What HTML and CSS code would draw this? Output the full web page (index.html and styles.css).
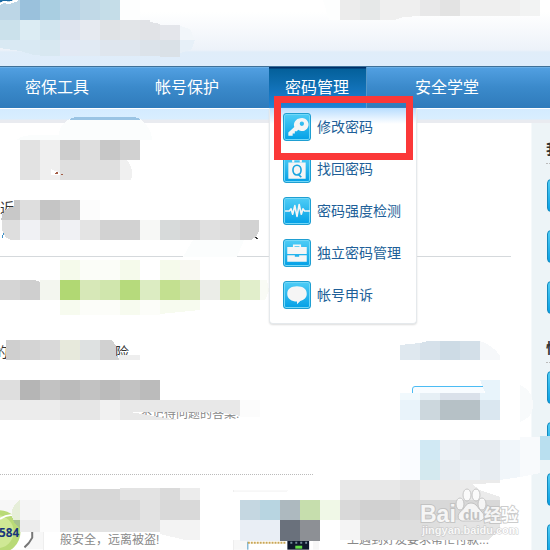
FILE: index.html
```html
<!DOCTYPE html>
<html lang="zh-CN">
<head>
<meta charset="utf-8">
<title>密码管理</title>
<link rel="stylesheet" href="styles.css">
</head>
<body>
<div class="page">
<header class="banner"></header>
<nav class="nav">
  <a class="tab" href="#tools">密保工具</a>
  <a class="tab" href="#account">帐号保护</a>
  <div class="tab-group">
    <a class="tab active" href="#password">密码管理</a>
    <div class="menu">
      <a class="item" href="#change"><svg class="icon" viewBox="2 2 24 24"><path fill="#f5f5f5" fill-rule="evenodd" d="M17 6a6 6 0 0 0-5.500 8L6 19v3h4v-2h2v-2h2l1-1.500A6 6 0 1 0 17 6zm1.500 3a2 2 0 1 1 0 4 2 2 0 0 1 0-4z"/></svg>修改密码</a>
      <a class="item" href="#recover"><svg class="icon" viewBox="2 2 24 24"><path fill="none" stroke="#f5f5f5" stroke-width="2" d="M10.500 8V5h7v3"/><path fill="#f5f5f5" d="M6 8h16v15H6z"/><path fill="none" stroke="#19a5df" stroke-width="1.500" d="M14 10.500c5 0 5 9 0 9s-5-9 0-9zM14.500 18.500l3.500 3"/></svg>找回密码</a>
      <a class="item" href="#strength"><svg class="icon" viewBox="2 2 24 24"><path fill="none" stroke="#f5f5f5" stroke-width="1.500" stroke-linejoin="round" d="M3 14h4l1.500-2L10 17l2-8 2 10 2-11 2 9 1.500-5 1.500 2H26"/></svg>密码强度检测</a>
      <a class="item" href="#standalone"><svg class="icon" viewBox="2 2 24 24"><path fill="none" stroke="#f5f5f5" stroke-width="1.500" d="M11 9V7h6v2"/><path fill="#f5f5f5" d="M5 8.500h18V15H5zM5 16h7v1.500h4V16h7v6H5z"/></svg>独立密码管理</a>
      <a class="item" href="#appeal"><svg class="icon" viewBox="2 2 24 24"><path fill="#f5f5f5" d="M14 6c5.500 0 9 2.500 9 7 0 3.500-2.500 5.500-6 6.500L14 22.500V20c-5 0-9-2.500-9-7s3.500-7 9-7z"/></svg>帐号申诉</a>
    </div>
  </div>
  <a class="tab" href="#school">安全学堂</a>
</nav>
<div class="band"></div>
<div class="body">
  <main class="content">
    <section class="recent"><h2 class="title">近</h2></section>
    <section class="risk">
      <h2 class="title risk-title"><span>的</span><span>险</span></h2>
      <div class="answer-row"><p class="note">不记得问题的答案.</p><button class="action" type="button" aria-label="设置"></button></div>
    </section>
    <section class="cards">
      <article class="card">
        <svg class="ball" viewBox="0 0 44 60"><path fill="#f7f7f7" d="M0 0h44v60H0z"/><path fill="#fff" d="M16 20q17 5 17 25 0 8-8 15H10z"/><path fill="none" stroke="#777" stroke-width="2" d="M25 24q9 12 8 24-3 6-8 10"/><circle cx="-1" cy="42" r="22" fill="#b9da77"/><circle cx="-3" cy="42" r="17" fill="#cfe895"/><path fill="none" stroke="#fff" stroke-width="2" d="M0 29q8-6 16-3"/><text class="ball-label" x="-1" y="47">584</text></svg>
        <p class="note">般安全，远离被盗!</p>
      </article>
      <article class="card second">
        <svg class="phone" viewBox="0 0 86 60"><path fill="#f7f7f7" d="M0 0h86v60H0z"/><path fill="#fff" d="M14 51h66v9H14z"/><path stroke="#4e9bc5" d="M14 52v8"/><path stroke="#c9a655" stroke-width="2" stroke-dasharray="2 1" d="M14 53h38"/><path fill="#10182c" d="M54 49h22v11H54z"/><path stroke="#758b9a" stroke-width="2" stroke-dasharray="2 3" d="M57 53h17"/><path fill="#62dc45" d="M62 56h7v3h-7z"/></svg>
        <p class="note">上遇到好友要求帮忙付款...</p>
      </article>
    </section>
  </main>
  <aside class="side">
    <h3 class="side-title">我</h3>
    <div class="side-list"><i class="chip"></i><i class="chip"></i><i class="chip"></i></div>
    <h3 class="side-title">快</h3>
    <div class="side-list"><i class="chip"></i><i class="chip"></i><i class="chip"></i><i class="chip"></i></div>
  </aside>
</div>
<svg class="mosaic" viewBox="0 0 550 550" shape-rendering="crispEdges" aria-hidden="true">
  <path fill="#bcd6e6" d="M0 0h20v20H0z"/><path fill="#9ac1dc" d="M20 0h20v20H20z"/><path fill="#a9cee1" d="M40 0h20v20H40z"/><path fill="#b8d3e5" d="M60 0h20v20H60z"/><path fill="#c1d9e7" d="M80 0h20v20H80z"/><path fill="#c5dde8" d="M100 0h20v20h-20z"/><path fill="#fdfefe" d="M120 0h20v20h-20z"/>
  <path fill="none" stroke="#fff" stroke-width="2" d="M0 4l4-2 5 1 6-2 3-1"/><path fill="none" stroke="#1c6ba3" stroke-width="2" d="M0 1l4-1h8"/>
  <path fill="#cbe1eb" d="M0 20h20v20H0z"/><path fill="#dcecf3" d="M20 20h20v20H20z"/><path fill="#d2e5ef" d="M40 20h20v20H40z"/><path fill="#dee4ee" d="M60 20h20v20H60z"/><path fill="#e6eaf0" d="M80 20h20v20H80z"/><path fill="#e0e3e6" d="M100 20h20v20h-20z"/><path fill="#e2e5e8" d="M120 20h20v20h-20z"/><path fill="#e1e3e7" d="M140 20h10v2l10 2v16h-20z"/><path fill="#e4e6eb" d="M160 25h20v15h-20z"/><path fill="#f2f6fa" d="M180 26l10 3 5 11h-15z"/>
  <path fill="#d9e9f3" d="M0 40h40v15h-6L20 51 0 48z"/><path fill="#d8e8f1" d="M40 40h20v16H40z"/><path fill="#e2e9f4" d="M60 40h20v16H60z"/><path fill="#e1eaf3" d="M80 40h20v16H80z"/><path fill="#dfe6ee" d="M100 40h40v16h-40z"/><path fill="#dce3ea" d="M140 40h20v16h-20z"/><path fill="#dae1e7" d="M160 40h20v17h-20z"/><path fill="#e7f0f8" d="M180 40h15l-3 9-12 4z"/>
  <path fill="#fdfefe" d="M323 0h17v20h-11z"/><path fill="#ececec" d="M340 0h20v20h-20z"/><path fill="#e6e8e8" d="M360 0h20v20h-20z"/><path fill="#efefef" d="M380 0h40v16l-16 1-10 3h-14z"/><path fill="#e8e8e9" d="M420 0h20v16h-20z"/><path fill="#e3e3e3" d="M440 0h20v16h-20z"/><path fill="#efefef" d="M460 0h60v16h-60z"/><path fill="#f2f3f3" d="M520 0h20v16h-20z"/>
  <path fill="#fbfdfd" d="M17 140q5-7 42-5 0-11 11-16h70q12 9 12 21z"/><path fill="#9ac4e4" d="M70 119l5-2h60l5 2v1H70z"/>
  <path fill="#e2e2e2" d="M20 140h20v40H20z"/><path fill="#efefef" d="M40 140h20v40H40z"/><path fill="#cecece" d="M60 140h20v20H60z"/><path fill="#dedede" d="M80 140h20v20H80z"/><path fill="#c8c8c8" d="M100 140h20v20h-20z"/><path fill="#d1d1d1" d="M120 140h20v20h-20z"/><path fill="#dfdfdf" d="M60 160h60v20H60z"/><path fill="#f0f0f0" d="M120 160h7q8 10 4 20h-11z"/><path fill="#fff" d="M51 169l9 4v2h-9z"/><path fill="#a45d46" d="M55 174l1-2h2v2zM61 174h2v1h-2z"/>
  <path fill="#c8c8c8" d="M14 200h6v20H1q2-13 13-13z"/><path fill="#dedede" d="M20 200h20v20H20z"/><path fill="#c5c5c5" d="M40 200h20v20H40z"/><path fill="#cfcfcf" d="M60 200h20v20H60z"/><path fill="#fcfcfc" d="M80 200h20v20H80z"/>
  <path fill="#dedede" d="M2 220h18v20h-9q-7-2-9-10z"/><path fill="#f0f1f4" d="M20 220h20v20H20zM60 220h20v20H60z"/><path fill="#e4e4e4" d="M40 220h20v20H40zM80 220h20v20H80z"/><path fill="#d2d2d2" d="M100 220h40v20h-40z"/><path fill="#f7f8f6" d="M140 220h20v20h-20z"/><path fill="#d7dada" d="M160 220h20v20h-20z"/><path fill="#d5d5d5" d="M180 220h20v20h-20z"/><path fill="#e0e0e0" d="M200 220h20v20h-20z"/><path fill="#dcdcdc" d="M220 220h20v20h-20z"/><path fill="#d2d2d2" d="M240 220h19v11q-1 5-8 9h-11z"/><path fill="#333" d="M255 237h2v1h1v1h-2z"/><path fill="#3f91c7" d="M3 233h1v2H3zM2 235h1v3H2z"/>
  <path fill="#fbfdfd" d="M183 257q8-14 10-17h51l-7 17z"/>
  <path fill="#f5faeb" d="M60 260h20v20H60zM120 260h20v20h-20zM160 260h20v20h-20z"/><path fill="#fbfdf8" d="M80 260h40v20H80z"/><path fill="#f8f8f1" d="M180 260h20v20h-20z"/>
  <path fill="#d5d5d5" d="M0 280h20v20H0z"/><path fill="#cfcfcf" d="M20 280h15l5 2v18H20z"/><path fill="#f3f6ef" d="M40 280h20v20H40z"/><path fill="#b1d873" d="M60 280h20v20H60z"/><path fill="#d7e8b8" d="M80 280h20v20H80z"/><path fill="#d0e6ad" d="M100 280h20v20h-20z"/><path fill="#b6da7c" d="M120 280h20v20h-20z"/><path fill="#dcecc2" d="M140 280h20v20h-20z"/><path fill="#c3e090" d="M160 280h20v20h-20z"/><path fill="#cfe2a8" d="M180 280h20v20h-20z"/><path fill="#ebede8" d="M200 280h20v20h-20z"/><path fill="#d3e7ad" d="M220 280h20v20h-20z"/><path fill="#e1eecb" d="M240 280h20v20h-20z"/><path fill="#f9fbf5" d="M260 280h7l2 11-4 9h-5z"/>
  <path fill="#f7fbef" d="M60 300h20v15H60zM120 300h20v15h-20zM160 300h40v10l-40 4z"/><path fill="#fcfdf9" d="M80 300h40v15H80zM140 300h20v15h-20z"/>
  <path fill="#cfcfcf" d="M6 340h14v20H6z"/><path fill="#d4d4d4" d="M20 340h20v20H20z"/><path fill="#d9d9d9" d="M40 340h20v20H40z"/><path fill="#e7e9dc" d="M60 340h20v20H60z"/><path fill="#dee1e1" d="M80 340h20v20H80z"/><path fill="#d1d1d1" d="M100 340h12l4 6v9l4 5h-20z"/><path fill="#eee" d="M119 355h21v5h-21z"/>
  <path fill="#dedede" d="M0 380h20v20H0z"/><path fill="#b5b5b5" d="M20 380h20v20H20z"/><path fill="#c2c2c2" d="M40 380h20v20H40zM80 380h20v20H80zM120 380h20v20h-20z"/><path fill="#bbb" d="M60 380h20v20H60zM100 380h20v20h-20zM140 380h20v20h-20z"/>
  <path fill="#ececec" d="M0 400h60v20H0z"/><path fill="#e6e6e6" d="M60 400h40v20H60z"/><path fill="#f1f1f1" d="M100 400h20v20h-20z"/><path fill="#e8e8e8" d="M120 400h120v16l-20-4h-90l35 6 15 2h-60z"/><path fill="#fcfcfc" d="M240 400h20v17h-20z"/>
  <path fill="#dfe8ef" d="M400 345l20-2v17h-20z"/><path fill="#d6e1ea" d="M420 343l8-2h12v19h-20z"/><path fill="#cddbe5" d="M440 341h20v19h-20z"/><path fill="#d3dfe8" d="M460 341h20v19h-20z"/><path fill="#f6f8fa" d="M480 341q13 4 20 15v4h-20z"/>
  <path fill="#fff" d="M484 384h36v30h-36z"/><path fill="#e8f4fb" d="M480 380h20v20h-12z"/><path fill="#fff" d="M400 393h88v29h-88z"/><path fill="#f1f9fd" d="M400 393h20v7h-20z"/><path fill="#e6eff5" d="M420 393h20v7h-20z"/><path fill="#dae1ea" d="M440 393h40v7h-40z"/><path fill="#e8f4fb" d="M480 393h20v7h-20z"/><path fill="#e9f3fa" d="M400 400h20v20h-20z"/><path fill="#ccd7dd" d="M420 400h20v20h-20z"/><path fill="#b6c1c6" d="M440 400h40v20h-40z"/><path fill="#dae7f0" d="M480 400h20v20h-20z"/><path fill="#f8fafb" d="M520 385q13 6 13 20 0 12-13 17z"/>
  <path fill="#fff" d="M313 462h207v30H286q16-14 27-14z"/><path fill="#fafcff" d="M400 440h20v40h-20z"/><path fill="#d1e9f4" d="M420 440h20v20h-20z"/><path fill="#d4e9ef" d="M420 460h20v20h-20z"/><path fill="#edf2f6" d="M440 440h20v20h-20z"/><path fill="#e7ecf1" d="M460 440h40v20h-40zM440 460h20v20h-20zM480 460h20v20h-20z"/><path fill="#edf2f6" d="M460 460h20v20h-20z"/><path fill="#f1f6fa" d="M500 440h20v37l-20 3z"/><path fill="#f8fafc" d="M520 437h20v36l-20 4z"/><path fill="#b9dfef" d="M540 436h10v24h-10z"/><path fill="#edf4f7" d="M540 460h10v10h-10z"/>
  <path fill="#fff" d="M45 490h55v42H45zM200 492h285v48H200z"/><path fill="#fbfbfb" d="M0 490h60v15l-20 7-20-12H0z"/><path fill="#e6eed9" d="M20 500v20h-7q-4-13 7-20z"/><path fill="#a7c28d" d="M13 520h7v8q-5-3-7-8z"/><path fill="#f5f5f5" d="M20 500h20v20H20z"/><path fill="#ececec" d="M20 520h20v12H20z"/><path fill="#fcfcfc" d="M40 490h20v42H40z"/>
  <path fill="#dedede" d="M60 490l20-1h20v11H60z"/><path fill="#d7d7d7" d="M80 489h40v11H80z"/><path fill="#e3e3e3" d="M120 488h40v12h-40z"/><path fill="#dadada" d="M160 488h20v12h-20z"/><path fill="#ececec" d="M180 488h20v12h-20z"/><path fill="#d2d2d2" d="M60 500h20v20H60z"/><path fill="#d8d8d8" d="M80 500h60v20H80z"/><path fill="#e2e2e2" d="M140 500h20v20h-20z"/><path fill="#d9d9d9" d="M160 500h40v20h-40z"/><path fill="#e3e3e3" d="M60 520h100v12H60z"/><path fill="#f3f3f3" d="M160 520h40v20h-15l-25-6z"/>
  <path fill="#c5d7e1" d="M240 500h20v20h-20z"/><path fill="#b8d5e1" d="M260 500h20v20h-20z"/><path fill="#adb9bf" d="M280 500h20v20h-20z"/><path fill="#c6dead" d="M300 500h20v20h-20z"/><path fill="#f0f8e7" d="M320 500h20v20h-20z"/><path fill="#e9eef5" d="M240 520h40v21h-40z"/><path fill="#6a717c" d="M280 520h20v21h-20z"/><path fill="#8d9095" d="M300 520h20v21h-20z"/>
  <path fill="#e8e8e8" d="M340 480h60v20h-60z"/><path fill="#e2e2e2" d="M400 480h20v20h-20z"/><path fill="#ebebeb" d="M420 480h80v3l-28 1 8 6 20 7v3h-80z"/><path fill="#d9d9d9" d="M340 500h20v20h-20z"/><path fill="#d1d1d1" d="M360 500h40v20h-40z"/><path fill="#d8d8d8" d="M400 500h100v20H400z"/><path fill="#f4f4f4" d="M340 520h20v20h-20z"/><path fill="#dedede" d="M360 520h80v20h-80z"/><path fill="#e4e4e4" d="M440 520h60v10l-12 10h-48z"/>
</svg>
<svg class="watermark" viewBox="0 0 110 60" aria-hidden="true">
  <g fill="#fff" stroke="#bbb"><ellipse cx="40" cy="19" rx="4" ry="6"/><ellipse cx="47" cy="10" rx="4" ry="6"/><ellipse cx="56" cy="10" rx="4" ry="6"/><ellipse cx="62" cy="19" rx="4" ry="6"/><path d="M51 18c6 0 7 6 11 9 5 5 1 10-5 9H45c-6 1-9-4-5-9 5-3 5-9 11-9z"/></g>
  <text class="wm-name" x="0" y="37">Bai</text><text class="wm-du" x="43" y="35">du</text><text class="wm-exp" x="64" y="36">经验</text><text class="wm-url" x="2" y="49">jingyan.baidu.com</text>
</svg>
<div class="highlight"></div>
</div>
</body>
</html>
```
FILE: styles.css
```css
* { box-sizing: border-box; }
body { margin: 0; background: #fff; font-family: "Liberation Sans", "Noto Sans CJK SC", sans-serif; }
.page { position: relative; height: 100vh; overflow: hidden; }
h2, h3, p { margin: 0; font-weight: normal; }
a { text-decoration: none; }

.banner { height: 66px; background: linear-gradient(#fff 0, #fff 12px, #edf2f9 50px, #e0edf9 52px, #dfedfb 100%); }
.nav { display: flex; gap: 32px; padding-left: 9px; border-top: 1px solid #3f7199; border-bottom: 1px solid #fff; background: linear-gradient(#82bdea 0, #519fe1 1px, #3b8acb 20px, #2f7bbb 100%); }
.tab { display: block; width: 98px; padding-left: 16px; line-height: 41px; font-size: 16px; color: #fff; white-space: nowrap; }
.tab-group { position: relative; }
.active { background: linear-gradient(#012f67 0, #012f67 1px, #04609a 2px, #1f83d6 100%); border-right: 1px solid #5797c8; }

.menu { position: absolute; z-index: 2; top: 41px; left: 0; width: 148px; padding: 5px 0 0 13px; border: 1px solid #e5e9ec; border-top: 0; border-radius: 0 0 4px 4px; box-shadow: 0 1px 2px #ddd; background: #fff linear-gradient(#b7ddff, #fff 16px) no-repeat; }
.item { display: flex; align-items: center; gap: 6px; height: 42px; padding-bottom: 14px; font-size: 14px; line-height: 28px; color: #205f98; white-space: nowrap; }
.icon { width: 28px; height: 28px; flex: none; border: 1px solid #1f9fd2; border-radius: 3px; background: linear-gradient(#4fcdf6, #03a0e6); box-shadow: inset 0 0 0 1px #74d8f8; }

.band { height: 14px; background: linear-gradient(#d4ebff 0, #d9eeff 10px, #e9ebf0 11px, #e9ebf0 100%); }
.body { display: flex; }
.content { flex: 1; min-width: 0; }
.recent { margin-right: 20px; padding: 75px 0 38px; border-bottom: 1px solid #d5d9dc; }
.title { font-size: 14px; line-height: 20px; color: #333; }
.risk { padding: 85px 0 50px; border-bottom: 1px dotted #bbb; }
.risk-title { display: flex; gap: 107px; margin-left: -6px; }
.answer-row { display: flex; justify-content: space-between; align-items: flex-start; margin-top: 24px; padding: 0 29px 0 140px; }
.note { font-size: 12px; line-height: 20px; color: #888; white-space: nowrap; }
.answer-row .note { padding-top: 18px; }
.action { width: 90px; height: 28px; border: 1px solid #4cbcf4; border-radius: 3px; background: #f8fcff; }
.cards { display: flex; padding-top: 15px; }
.card { display: flex; align-items: flex-end; gap: 16px; flex: 0 0 233px; }
.second { gap: 28px; }
.ball { flex: none; width: 44px; height: 60px; border-right: 1px solid #eee; }
.ball-label { font: bold 12px "Noto Sans", sans-serif; fill: #18367b; }
.phone { width: 86px; height: 60px; flex: none; border-left: 1px solid #eee; }

.side { flex: 0 0 19px; padding: 16px 0 0 14px; overflow: hidden; background: #edf4f7; border-left: 1px solid #f5f9fb; }
.side-title { height: 25px; padding-bottom: 3px; font-size: 14px; font-weight: bold; line-height: 20px; color: #333; border-bottom: 1px dotted #bbb; white-space: nowrap; }
.side-list { display: flex; flex-direction: column; gap: 18px; padding: 15px 0 24px 1px; }
.side-title + .side-list:last-child { padding-top: 8px; }
.chip { display: block; flex: none; width: 60px; height: 33px; border: 1px solid #1489be; border-radius: 4px; background: linear-gradient(#51cdf4, #079fe4); }

.mosaic { position: absolute; z-index: 1; top: 0; left: 0; width: 550px; height: 550px; pointer-events: none; }
.watermark { position: absolute; z-index: 3; top: 485px; left: 420px; width: 110px; height: 60px; opacity: 0.75; }
.watermark text { fill: #fff; stroke: #bbb; stroke-width: 2px; paint-order: stroke; font-family: "Liberation Sans", "Noto Sans CJK SC", sans-serif; font-weight: bold; }
.watermark .wm-name { font-size: 23px; }
.watermark .wm-du { font-size: 14px; fill: #bbb; stroke: none; }
.watermark .wm-exp { font-size: 17px; }
.watermark .wm-url { font-size: 11px; stroke-width: 1px; }
.highlight { position: absolute; z-index: 4; top: 96px; left: 274px; width: 139px; height: 64px; border: 7px solid #fb3838; }
```
